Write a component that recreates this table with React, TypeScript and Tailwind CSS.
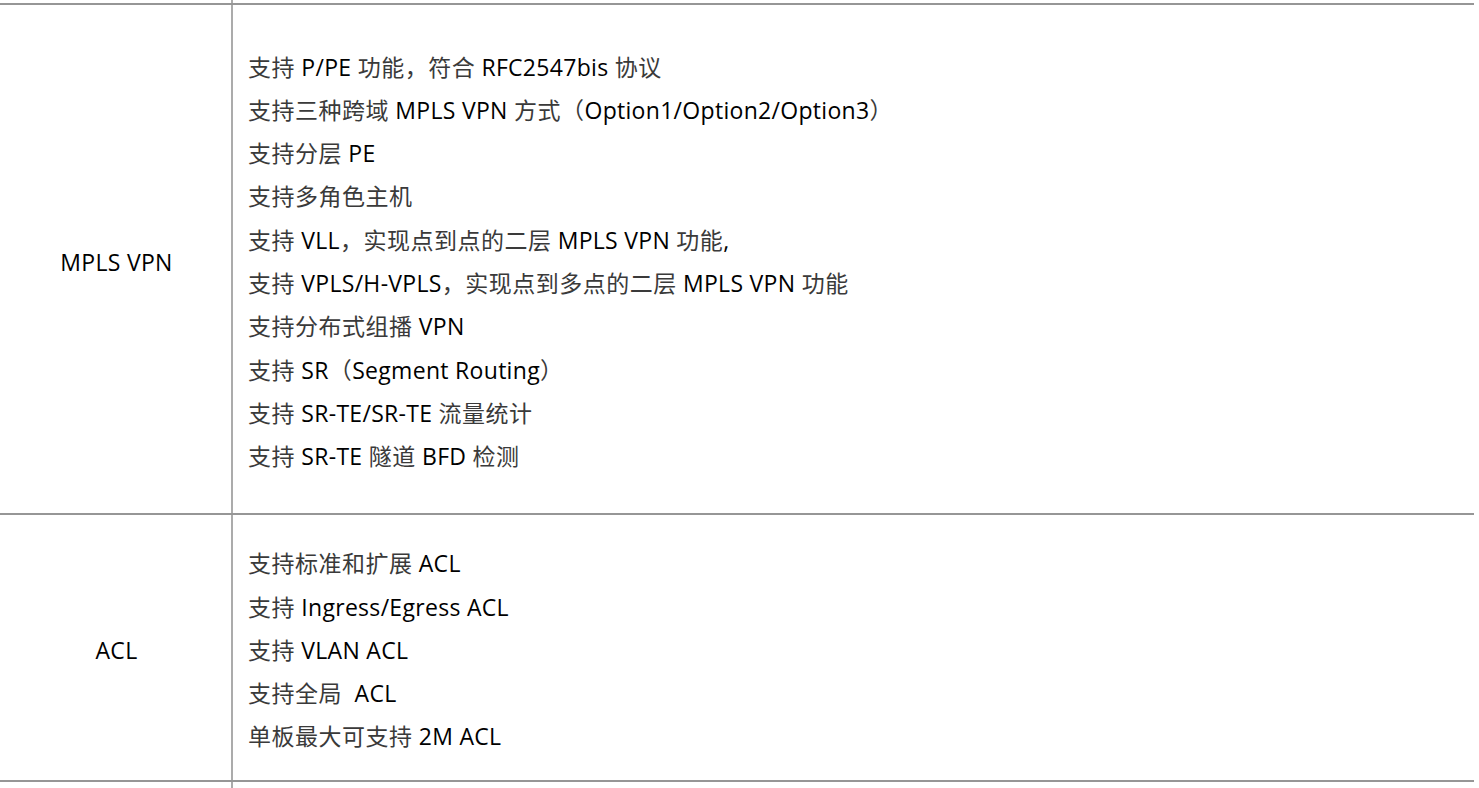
import React from 'react'

const rows = [
  {
    label: 'MPLS VPN',
    height: 'h-[510px]',
    items: [
      '支持 P/PE 功能，符合 RFC2547bis 协议',
      '支持三种跨域 MPLS VPN 方式（Option1/Option2/Option3）',
      '支持分层 PE',
      '支持多角色主机',
      '支持 VLL，实现点到点的二层 MPLS VPN 功能,',
      '支持 VPLS/H-VPLS，实现点到多点的二层 MPLS VPN 功能',
      '支持分布式组播 VPN',
      '支持 SR（Segment Routing）',
      '支持 SR-TE/SR-TE 流量统计',
      '支持 SR-TE 隧道 BFD 检测',
    ],
  },
  {
    label: 'ACL',
    height: 'h-[267px]',
    items: [
      '支持标准和扩展 ACL',
      '支持 Ingress/Egress ACL',
      '支持 VLAN ACL',
      '支持全局  ACL',
      '单板最大可支持 2M ACL',
    ],
  },
]

// chinese runs are a bit greyer than the latin text
function Mixed({ text }: { text: string }) {
  const parts = text.split(/([\u3000-\u9fff\uff00-\uffef]+)/)
  return (
    <>
      {parts.map((p, i) =>
        /[\u3000-\u9fff\uff00-\uffef]/.test(p) ? (
          <span key={i} className="text-[#3a3a3a] tracking-[0.5px]">
            {p}
          </span>
        ) : (
          <span key={i} className="tracking-[0.3px]">{p}</span>
        )
      )}
    </>
  )
}

export default function App() {
  return (
    <div className="min-h-screen bg-white text-black font-['Open_Sans','Noto_Sans_CJK_SC',sans-serif] text-[23px]">
      <div className="w-[1474px]">
        <div className="flex h-[3px]">
          <div className="w-[233px] border-r-2 border-[#ababab]" />
        </div>
        {rows.map((row) => (
          <div key={row.label} className={`flex border-t-2 border-[#969696] ${row.height}`}>
            <div className="w-[233px] shrink-0 border-r-2 border-[#ababab] flex items-center justify-center pt-[6px] pl-[2px] tracking-[0.3px]">
              {row.label}
            </div>
            <div className="flex-1 flex flex-col justify-center pl-[15px] pt-[6px]">
              {row.items.map((t) => (
                <div key={t} className="leading-[43.3px] whitespace-pre">
                  <Mixed text={t} />
                </div>
              ))}
            </div>
          </div>
        ))}
        <div className="flex h-[8px] border-t-2 border-[#969696]">
          <div className="w-[233px] border-r-2 border-[#ababab]" />
        </div>
      </div>
    </div>
  )
}
